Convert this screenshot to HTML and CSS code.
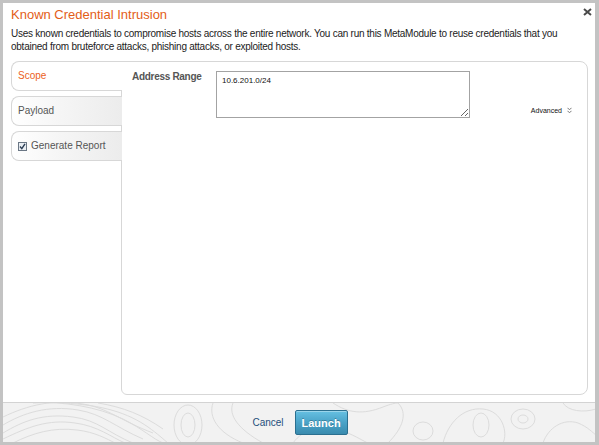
FILE: index.html
```html
<!DOCTYPE html>
<html>
<head>
<meta charset="utf-8">
<title>Known Credential Intrusion</title>
<link rel="stylesheet" href="styles.css">
</head>
<body>
<div class="dialog">
  <div class="header">
    <div class="title-row">
      <h1 class="title">Known Credential Intrusion</h1>
      <svg class="close" width="9" height="8" viewBox="0 0 9 8"><path d="M1 1 L8 7 M8 1 L1 7" stroke="#4a4a4a" stroke-width="2" fill="none"/></svg>
    </div>
    <p class="desc">Uses known credentials to compromise hosts across the entire network. You can run this MetaModule to reuse credentials that you<br>obtained from bruteforce attacks, phishing attacks, or exploited hosts.</p>
  </div>
  <div class="main">
    <div class="tabs">
      <div class="tab active">Scope</div>
      <div class="tab">Payload</div>
      <div class="tab">
        <svg class="check" width="9" height="9" viewBox="0 0 9 9"><rect x="0.5" y="0.5" width="8" height="8" fill="#e9eef3" stroke="#6b7785"/><path d="M2 4.5 L3.8 6.6 L7 1.8" stroke="#2c3e55" stroke-width="1.4" fill="none"/></svg>
        <span>Generate Report</span>
      </div>
    </div>
    <div class="content">
      <div class="field-row">
        <label class="label">Address Range</label>
        <textarea class="input">10.6.201.0/24</textarea>
        <div class="advanced">Advanced <svg width="5" height="7" viewBox="0 0 5 7"><path d="M0.5 0.8 L2.5 2.8 L4.5 0.8 M0.5 3.8 L2.5 5.8 L4.5 3.8" stroke="#777" stroke-width="1" fill="none"/></svg></div>
      </div>
    </div>
  </div>
  <div class="footer">
    <a class="cancel">Cancel</a>
    <button class="launch">Launch</button>
  </div>
</div>
</body>
</html>
```
FILE: styles.css
```css
html, body {
  margin: 0;
  padding: 0;
}
body {
  background: #c3c3c3;
  height: 445px;
  overflow: hidden;
  font-family: "Liberation Sans", Arial, sans-serif;
}
.dialog {
  margin: 3px 4px 3px 3px;
  height: 439px;
  background: #fff;
  display: flex;
  flex-direction: column;
}
.header {
  padding: 4px 3px 0 8px;
}
.title-row {
  display: flex;
  justify-content: space-between;
  align-items: flex-start;
  height: 16px;
}
.title {
  margin: 0;
  font-size: 13px;
  line-height: 16px;
  font-weight: normal;
  color: #e35d17;
}
.close {
  display: block;
  margin-top: 1px;
}
.desc {
  margin: 4px 0 0;
  font-size: 10px;
  line-height: 13px;
  color: #222;
  letter-spacing: -0.25px;
}
.main {
  display: flex;
  margin: 8px 7px 0 8px;
  height: 334px;
}
.tabs {
  width: 111px;
  margin-right: -1px;
  display: flex;
  flex-direction: column;
  gap: 5px;
  position: relative;
  z-index: 1;
}
.tab {
  height: 30px;
  box-sizing: border-box;
  border: 1px solid #d7d7d7;
  border-right: none;
  border-radius: 8px 0 0 8px;
  padding-left: 6px;
  font-size: 10px;
  line-height: 28px;
  color: #555;
  background: linear-gradient(to right, #ffffff 0%, #f6f6f6 40%, #ececec 100%);
  display: flex;
  align-items: center;
  gap: 4px;
}
.tab.active {
  background: #fff;
  color: #ec5f1c;
}
.check {
  display: block;
}
.content {
  flex: 1;
  border: 1px solid #d7d7d7;
  border-radius: 0 8px 8px 6px;
  padding: 9px 15px 0 10px;
}
.field-row {
  display: flex;
  align-items: flex-start;
}
.label {
  width: 84px;
  font-size: 10px;
  line-height: 12px;
  font-weight: bold;
  color: #555;
  letter-spacing: -0.3px;
}
.input {
  width: 254px;
  height: 47px;
  box-sizing: border-box;
  border: 1px solid #a3a3a3;
  padding: 4px 5px;
  margin: 0;
  font-family: "Liberation Sans", Arial, sans-serif;
  font-size: 8px;
  line-height: 10px;
  color: #111;
  resize: both;
  outline: none;
}
.advanced {
  margin-left: auto;
  margin-top: 35px;
  font-size: 7px;
  line-height: 9px;
  color: #111;
  display: flex;
  align-items: center;
  gap: 5px;
}
.advanced svg {
  display: block;
}
.footer {
  margin-top: 7px;
  flex: 1;
  border-top: 1px solid #d3d3d3;
  background-color: #f2f2f2;
  background-image: url("data:image/svg+xml;utf8,<svg xmlns='http://www.w3.org/2000/svg' width='593' height='40' viewBox='0 0 593 40'><g fill='none' stroke='%23dcdcdc' stroke-width='1'><path d='M0 30 C20 18 40 10 70 14 C95 17 105 30 130 40'/><path d='M0 36 C25 24 45 16 72 20 C95 23 108 34 122 40'/><path d='M10 40 C30 30 50 24 74 27 C92 29 104 36 112 40'/><path d='M0 22 C20 10 45 2 75 7 C100 11 112 24 140 36'/><path d='M0 14 C25 2 50 -4 80 1 C105 5 118 18 150 30'/><path d='M30 0 C60 -2 95 4 120 16 C140 26 150 36 160 40'/><path d='M60 0 C100 2 125 10 145 24 C155 31 160 36 165 40'/><path d='M95 0 C120 4 140 12 160 26'/><ellipse cx='185' cy='22' rx='7' ry='12'/><ellipse cx='185' cy='22' rx='14' ry='20'/><path d='M210 0 C205 14 215 30 240 40'/><path d='M230 0 C225 12 235 26 260 40'/><path d='M290 40 C300 26 320 20 340 28 C355 34 360 38 365 40'/><path d='M330 0 C345 10 360 12 380 4 C388 1 392 0 395 0'/><ellipse cx='420' cy='28' rx='10' ry='9'/><path d='M440 40 C445 20 460 4 480 6 C500 8 505 30 500 40'/><ellipse cx='478' cy='22' rx='8' ry='12'/><ellipse cx='520' cy='16' rx='12' ry='10'/><ellipse cx='520' cy='16' rx='5' ry='4'/><path d='M540 40 C545 25 560 15 575 20 C585 24 590 30 593 32'/><path d='M560 0 C565 8 580 10 593 6'/><path d='M395 0 C405 10 400 25 385 40'/></g></svg>");
  background-repeat: no-repeat;
  display: flex;
  align-items: center;
  justify-content: center;
  gap: 11px;
  padding-left: 2px;
}
.cancel {
  font-size: 10px;
  color: #244e7c;
  cursor: pointer;
}
.launch {
  width: 53px;
  height: 25px;
  box-sizing: border-box;
  border: 1px solid #2b6f8f;
  border-radius: 2px;
  background: linear-gradient(to bottom, #66c0e2 0%, #4aa3c8 50%, #3a8bae 100%);
  box-shadow: inset 0 1px 0 rgba(255,255,255,0.35);
  color: #fff;
  font-family: "Liberation Sans", Arial, sans-serif;
  font-size: 11px;
  font-weight: bold;
  text-shadow: 0 -1px 0 rgba(0,0,0,0.25);
  padding: 0;
}
```
